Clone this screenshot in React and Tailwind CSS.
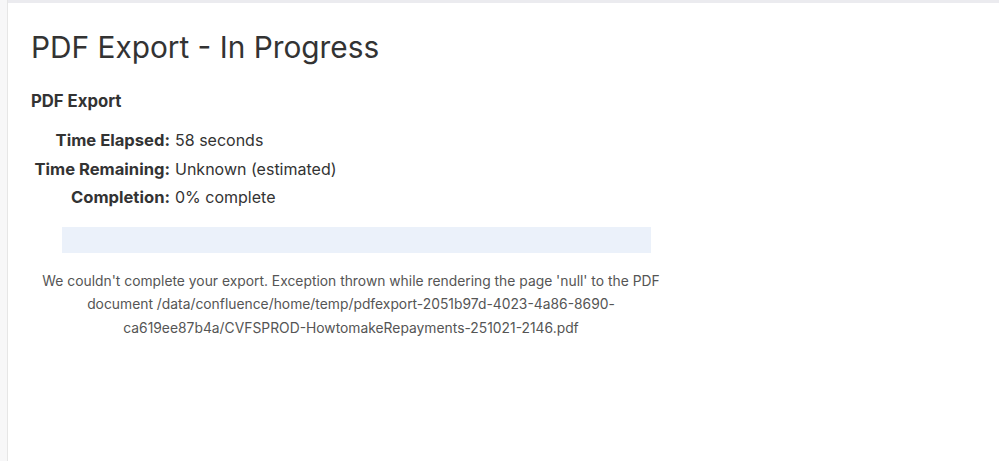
import React from 'react';

const rows = [
  { label: 'Time Elapsed:', value: '58 seconds' },
  { label: 'Time Remaining:', value: 'Unknown (estimated)' },
  { label: 'Completion:', value: '0% complete' },
];

const App = () => {
  return (
    <div className="flex min-h-[461px] w-full bg-white font-['Inter',sans-serif] text-[#333]">
      {/* Left gutter */}
      <div className="w-[8px] shrink-0 border-r border-[#e6e6e6] bg-[#f7f7f8]" />

      <div className="flex-1 border-t-[3px] border-[#ebebef]">
        <div className="w-[669px] pl-[23px] pt-[26px]">
          <h1 className="text-[29.8px] leading-[36px] font-normal text-[#333]">PDF Export - In Progress</h1>

          <h2 className="mt-[26px] text-[16.7px] font-bold leading-[20px] text-[#333]">PDF Export</h2>

          {/* Progress details */}
          <div className="mt-[15px] flex flex-col">
            {rows.map(row => (
              <div key={row.label} className="flex items-baseline text-[16px] leading-[28.5px]">
                <span className="w-[139px] text-right text-[16.6px] font-bold">{row.label}</span>
                <span className="ml-[5px]">{row.value}</span>
              </div>
            ))}
          </div>

          {/* Progress bar */}
          <div className="ml-[31px] mt-[15px] h-[26px] w-[589px] bg-[#ebf1fa]" />

          {/* Error message */}
          <p className="mt-[17px] pr-[6px] text-center text-[13.85px] leading-[23.5px] text-[#555]">
            We couldn't complete your export. Exception thrown while rendering the page 'null' to the PDF document
            /data/confluence/home/temp/pdfexport-2051b97d-4023-4a86-8690-ca619ee87b4a/CVFSPROD-HowtomakeRepayments-251021-2146.pdf
          </p>
        </div>
      </div>
    </div>
  );
};

export default App;
